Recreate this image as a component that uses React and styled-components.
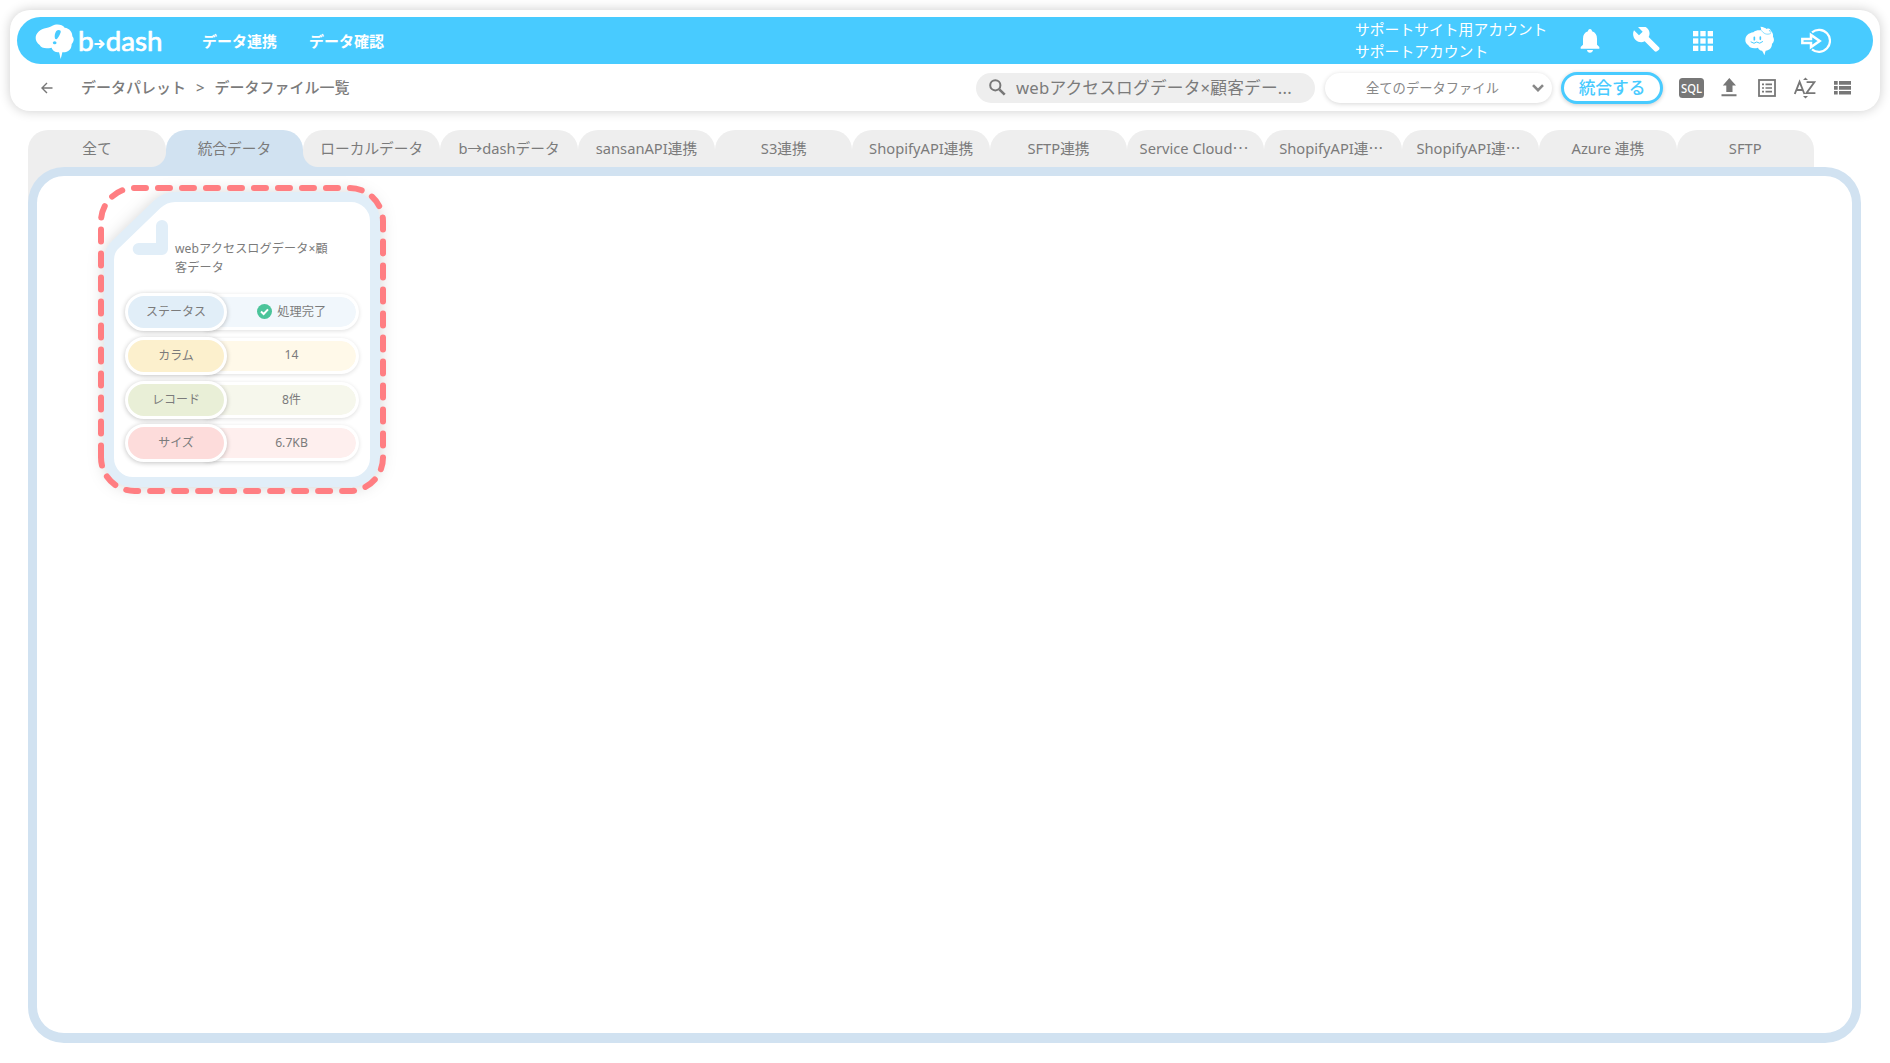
import React from "react";
import styled, { createGlobalStyle } from "styled-components";

const Global = createGlobalStyle`
  * { box-sizing: border-box; }
  body {
    margin: 0;
    background: #fff;
    color: #7b7b7b;
    font-family: "Noto Sans", "Noto Sans CJK JP", sans-serif;
    overflow: hidden;
  }
  button { font: inherit; color: inherit; background: none; border: 0; padding: 0; margin: 0; }
  svg { display: block; flex: none; }
`;

const Page = styled.div`
  height: 1063px;
  padding: 10px 10px 0;
  display: flex;
  flex-direction: column;
`;

const Header = styled.header`
  height: 101px;
  padding: 7px;
  border-radius: 20px;
  background: #fff;
  box-shadow: 0 0 12px rgba(0, 0, 0, 0.2);
`;

const TopBar = styled.div`
  height: 47px;
  border-radius: 24px;
  background: #48cbff;
  color: #fff;
  display: flex;
  align-items: center;
  padding: 0 42px 0 17px;
`;

const Nav = styled.nav`
  display: flex;
  gap: 32px;
  margin-left: 38px;
  font-size: 15px;
  font-weight: 700;
  line-height: 20px;
`;

const Account = styled.div`
  margin-left: auto;
  width: 225px;
  font-size: 14.8px;
  line-height: 21.5px;
  white-space: nowrap;
`;

const TopIcons = styled.div`
  display: flex;
  align-items: center;
`;

const IconButton = styled.button`
  display: block;
  margin-left: ${(p) => p.$gap || 0}px;
`;

const SubBar = styled.div`
  height: 47px;
  display: flex;
  align-items: center;
  padding: 0 22px 0 24px;
`;

const Crumbs = styled.div`
  display: flex;
  gap: 10px;
  margin: 0 0 1px 28px;
  font-size: 15px;
  line-height: 20px;
  font-weight: 500;
`;

const Search = styled.div`
  margin-left: auto;
  width: 339px;
  height: 30px;
  border-radius: 15px;
  background: #eee;
  display: flex;
  align-items: center;
  gap: 10px;
  padding-left: 13px;
  font-size: 16.7px;
  letter-spacing: 0.2px;
  line-height: 24px;
  white-space: nowrap;
`;

const Select = styled.div`
  margin-left: 10px;
  width: 227px;
  height: 30px;
  border-radius: 15px;
  box-shadow: 0 1px 5px rgba(0, 0, 0, 0.16);
  display: flex;
  align-items: center;
  justify-content: space-between;
  padding: 0 8px 0 41px;
  font-size: 13.3px;
  color: #888;
`;

const MergeButton = styled.button`
  && {
    margin: 0 16px 0 9px;
    width: 102px;
    height: 32px;
    border: 3px solid #48cbff;
    border-radius: 16px;
    background: #fff;
    box-shadow: 0 1px 4px rgba(0, 0, 0, 0.2);
    color: #48cbff;
    font-size: 16.7px;
    font-weight: 500;
    line-height: 24px;
  }
`;

const Main = styled.main`
  margin: 19px 0 0 18.4px;
  width: 1832.8px;
`;

const Tabs = styled.div`
  display: flex;
  height: 37px;
  width: 1785.5px;
`;

const Tab = styled.div`
  position: relative;
  flex: 1 1 0;
  min-width: 0;
  height: 37px;
  border-radius: 20px 20px 0 0;
  background: ${(p) => (p.$active ? "#d1e2f1" : "#eee")};
  text-align: center;
  font-size: 14.7px;
  line-height: 37px;
  white-space: nowrap;
  z-index: ${(p) => (p.$active ? 1 : 0)};
  &::before,
  &::after {
    content: "";
    display: ${(p) => (p.$active ? "block" : "none")};
    position: absolute;
    bottom: 0;
    width: 15px;
    height: 15px;
  }
  &::before {
    left: -15px;
    background: radial-gradient(circle at 0 0, transparent 14.5px, #d1e2f1 15.5px);
  }
  &::after {
    right: -15px;
    background: radial-gradient(circle at 100% 0, transparent 14.5px, #d1e2f1 15.5px);
  }
`;

const Dots = styled.span`
  font-family: "Noto Sans CJK JP", sans-serif;
  line-height: 1;
  margin-right: 4px;
  vertical-align: ${(p) => p.$raise || 0}px;
`;

const PanelBack = styled.div`
  background: linear-gradient(#eee, #eee) 0 0 / 60px 38px no-repeat;
`;

const Panel = styled.section`
  height: 876px;
  border: 9px solid #d1e2f1;
  border-bottom-width: 10px;
  border-radius: 36px;
  background: #fff;
  padding: 9px 60.6px;
`;

const Card = styled.article`
  position: relative;
  width: 288px;
  height: 309px;
  padding: 55px 27px 0;
`;

const CardFrame = styled.svg`
  position: absolute;
  inset: 0;
  overflow: visible;
`;

const CardBody = styled.div`
  position: relative;
`;

const CardTitle = styled.h3`
  margin: 0 0 16px 50px;
  height: 37px;
  font-size: 12.1px;
  letter-spacing: 0.12px;
  font-weight: 400;
  line-height: 18.5px;
  white-space: nowrap;
`;

const Rows = styled.div`
  display: flex;
  flex-direction: column;
  gap: 5.8px;
`;

const Row = styled.div`
  display: flex;
  align-items: center;
  width: 234px;
  height: 38px;
`;

const Label = styled.div`
  position: relative;
  z-index: 1;
  width: 102px;
  height: 38px;
  border: 3px solid #fff;
  border-radius: 19px;
  background: ${(p) => p.$bg};
  box-shadow: 0 1px 5px rgba(0, 0, 0, 0.24);
  text-align: center;
  font-size: 12px;
  line-height: 31px;
`;

const Value = styled.div`
  width: 154px;
  height: 36px;
  margin-left: -22px;
  border: 3px solid #fff;
  border-left: 0;
  border-radius: 0 18px 18px 0;
  background: ${(p) => p.$bg};
  background-clip: padding-box;
  box-shadow: 0 1px 4px rgba(0, 0, 0, 0.13);
  display: flex;
  align-items: center;
  justify-content: center;
  gap: 5.5px;
  padding: 0 0 2px 22px;
  font-size: 12.2px;
`;

const Logo = () => (
  <svg width="130" height="38" viewBox="102 66 390 114">
    <path
      fill="#fff"
      d="M107 114C107 99 121 87 139 84C148 82 151 80 157 77C168 71 187 72 194 83C208 84 218 97 217 109C224 116 221 127 215 132C215 148 205 158 187 157C186 164 184 170 182 177C180 169 179 163 177 157C165 157 157 151 155 143C136 147 124 144 119 135C111 130 107 122 107 114Z"
    />
    <path d="M166 117C162 111 165 98 169 93C174 88 184 90 182 97C180 104 174 114 170 118Z" fill="#48cbff" />
    <ellipse cx="164" cy="128" rx="5.500" ry="4.500" fill="#48cbff" />
    <g fill="#fff" stroke="#fff" strokeWidth="2.2" strokeLinejoin="round" fontFamily="Lato, sans-serif" fontSize="82">
      <text x="234" y="152" textLength="47" lengthAdjust="spacingAndGlyphs">b</text>
      <text x="317" y="152" textLength="170" lengthAdjust="spacingAndGlyphs">dash</text>
    </g>
    <path d="M286 132H309M300 122L311 132L300 142" fill="none" stroke="#fff" strokeWidth="6.500" strokeLinecap="round" strokeLinejoin="round" />
  </svg>
);

const Bell = () => (
  <svg width="20" height="24" viewBox="0 0 60 72" fill="#fff">
    <path d="M30 0C34 0 36 3 36 7C46 10 51 18 51 29V47L58 54V59H2V54L9 47V29C9 18 14 10 24 7C24 3 26 0 30 0ZM21 63H39C38 69 35 71 30 71C25 71 22 69 21 63Z" />
  </svg>
);

const Wrench = () => (
  <svg width="27" height="27" viewBox="98 79 81 81" fill="#fff">
    <path d="M176 140L145 109C150 99 148 89 140 82C132 75 121 74 112 78L127 93L116 104L101 89C96 98 98 110 106 118C114 125 124 127 133 122L163 152C165 154 168 154 170 152L176 147C178 145 178 142 176 140Z" />
  </svg>
);

const Grid = () => (
  <svg width="20" height="20" viewBox="0 0 60 60" fill="#fff">
    {[0, 22, 44].map((y) => [0, 22, 44].map((x) => <rect key={`${x}-${y}`} x={x} y={y} width="16" height="16" />))}
  </svg>
);

const Mascot = () => (
  <svg width="30" height="30" viewBox="436 78 90 90">
    <path
      fill="#fff"
      d="M437 121C437 107 447 99 461 97C467 91 476 90 483 91C486 90 484 84 482 80C492 81 498 84 501 87C508 83 513 88 513 92C519 96 521 103 520 110C525 117 523 127 517 131C517 143 509 151 498 152C496 157 496 161 494 166C492 160 490 156 487 152C481 151 477 148 475 143C464 147 449 144 446 136C440 132 437 127 437 121Z"
    />
    <g fill="none" stroke="#48cbff" strokeWidth="3" strokeLinecap="round">
      <path d="M464 112V119M482 111V118" strokeWidth="5" />
      <path d="M454 126Q464 134 471 126Q480 134 489 125" />
      <path d="M486 92C492 102 502 105 512 101M509 91L513 97" strokeWidth="2" />
    </g>
  </svg>
);

const Logout = () => (
  <svg width="30" height="26" viewBox="604 85 90 78" fill="none" stroke="#fff">
    <path d="M637 98A33 33 0 1 1 637 149" strokeWidth="6.5" />
    <path d="M608 118H634V106L660 124L634 142V130H608Z" strokeWidth="7.5" />
  </svg>
);

const Back = () => (
  <svg width="12" height="12" viewBox="0 0 12 12" fill="none" stroke="#777" strokeWidth="1.4">
    <path d="M11.5 6H1.2M6 1L1 6L6 11" />
  </svg>
);

const Magnifier = () => (
  <svg width="17" height="17" viewBox="0 0 17 17" fill="none" stroke="#777">
    <circle cx="6.3" cy="6.3" r="5.1" strokeWidth="2" />
    <path d="M10.3 10.3L15.7 15.7" strokeWidth="2.6" />
  </svg>
);

const Chevron = () => (
  <svg width="12" height="8" viewBox="0 0 12 8" fill="none" stroke="#888" strokeWidth="2.6">
    <path d="M1 1.2L6 6.2L11 1.2" />
  </svg>
);

const Sql = () => (
  <svg width="25" height="20" viewBox="0 0 25 20">
    <rect width="25" height="20" rx="3.5" fill="#777" />
    <text x="2" y="14.5" textLength="21" lengthAdjust="spacingAndGlyphs" fontSize="12" fontWeight="500" fontFamily="Noto Sans, sans-serif" fill="#fff">SQL</text>
  </svg>
);

const Upload = () => (
  <svg width="16" height="19" viewBox="0 0 16 19" fill="#777">
    <path d="M8.300 0L15 7.500H11.500V14H5.300V7.500H1.800ZM0.500 16.2H15.500V18.2H0.500Z" />
  </svg>
);

const ListBox = () => (
  <svg width="18" height="18" viewBox="0 0 18 18" fill="none" stroke="#777">
    <rect x="1" y="1" width="16" height="16" strokeWidth="1.8" />
    <path d="M4 5.4H6M4 9H6M4 12.6H6M7.5 5.4H14M7.5 9H14M7.5 12.6H14" strokeWidth="1.7" />
  </svg>
);

const SortAz = () => (
  <svg width="22" height="22" viewBox="0 0 22 22" fill="#777">
    <path d="M9 3L11.5 0.5L14 3ZM9 19L11.5 21.5L14 19Z" />
    <g fill="none" stroke="#777" strokeWidth="1.8">
      <path d="M0.8 17L5.6 4.8L10.4 17M2.5 13H8.7M12.6 5.2H20.3L12.4 16.2H21.4" />
    </g>
  </svg>
);

const RowsIcon = () => (
  <svg width="17" height="14" viewBox="0 0 17 14" fill="#777">
    <path d="M0 0H3.7V3.7H0ZM5 0H17V3.7H5ZM0 5H3.7V8.7H0ZM5 5H17V8.7H5ZM0 10H3.7V13.5H0ZM5 10H17V13.5H5Z" />
  </svg>
);

const Check = () => (
  <svg width="15" height="15" viewBox="0 0 15 15">
    <circle cx="7.5" cy="7.5" r="7.5" fill="#4bc49a" />
    <path d="M4 7.6L6.6 10L11 5.4" fill="none" stroke="#fff" strokeWidth="2" />
  </svg>
);

const tabs = [
  { name: "全て" },
  { name: "統合データ" },
  { name: "ローカルデータ" },
  { name: "b→dashデータ" },
  { name: "sansanAPI連携" },
  { name: "S3連携" },
  { name: "ShopifyAPI連携" },
  { name: "SFTP連携" },
  { name: "Service Cloud", cut: true, raise: 5 },
  { name: "ShopifyAPI連", cut: true },
  { name: "ShopifyAPI連", cut: true },
  { name: "Azure 連携" },
  { name: "SFTP" },
];

const rows = [
  { label: "ステータス", value: "処理完了", done: true, bg: "#e1eef8", soft: "#f1f7fc" },
  { label: "カラム", value: "14", bg: "#fcf0cd", soft: "#fff9e9" },
  { label: "レコード", value: "8件", bg: "#e9efd7", soft: "#f6f7ec" },
  { label: "サイズ", value: "6.7KB", bg: "#fddcdb", soft: "#feefee" },
];

export default function App() {
  return (
    <>
      <Global />
      <Page>
        <Header>
          <TopBar>
            <Logo />
            <Nav>
              <span>データ連携</span>
              <span>データ確認</span>
            </Nav>
            <Account>
              サポートサイト用アカウント
              <br />
              サポートアカウント
            </Account>
            <TopIcons>
              <IconButton><Bell /></IconButton>
              <IconButton $gap={33}><Wrench /></IconButton>
              <IconButton $gap={33}><Grid /></IconButton>
              <IconButton $gap={32}><Mascot /></IconButton>
              <IconButton $gap={26}><Logout /></IconButton>
            </TopIcons>
          </TopBar>
          <SubBar>
            <Back />
            <Crumbs>
              <span>データパレット</span>
              <span>&gt;</span>
              <span>データファイル一覧</span>
            </Crumbs>
            <Search>
              <Magnifier />
              <span>webアクセスログデータ×顧客デー...</span>
            </Search>
            <Select>
              全てのデータファイル
              <Chevron />
            </Select>
            <MergeButton>統合する</MergeButton>
            <IconButton><Sql /></IconButton>
            <IconButton $gap={17}><Upload /></IconButton>
            <IconButton $gap={21}><ListBox /></IconButton>
            <IconButton $gap={18}><SortAz /></IconButton>
            <IconButton $gap={18}><RowsIcon /></IconButton>
          </SubBar>
        </Header>
        <Main>
          <Tabs>
            {tabs.map((t, i) => (
              <Tab key={i} $active={i === 1}>
                {t.name}
                {t.cut && <Dots $raise={t.raise}>⋯</Dots>}
              </Tab>
            ))}
          </Tabs>
          <PanelBack>
            <Panel>
              <Card>
                <CardFrame width="288" height="309" viewBox="98 185 288 309" fill="none">
                  <path
                    d="M109 260Q109 250 116 244L157 204.500Q165 197 175 197H351A24 24 0 0 1 375 221V458A24 24 0 0 1 351 482H133A24 24 0 0 1 109 458Z"
                    fill="#fff"
                    stroke="#e1eef8"
                    strokeWidth="10"
                    style={{ filter: "drop-shadow(0 1px 8px rgba(0,0,0,0.17))" }}
                  />
                  <path d="M162 226V249H138.700" stroke="#e1eef8" strokeWidth="12" strokeLinecap="round" strokeLinejoin="round" />
                  <path
                    d="M101 457.500V221.500A33.500 33.500 0 0 1 134.500 188H349.500A33.500 33.500 0 0 1 383 221.500V457.500A33.500 33.500 0 0 1 349.500 491H134.500A33.500 33.500 0 0 1 101 457.500"
                    stroke="#ff7e82"
                    strokeWidth="6"
                    strokeLinecap="round"
                    strokeDasharray="12 12"
                  />
                </CardFrame>
                <CardBody>
                  <CardTitle>
                    webアクセスログデータ×顧
                    <br />
                    客データ
                  </CardTitle>
                  <Rows>
                    {rows.map((r) => (
                      <Row key={r.label}>
                        <Label $bg={r.bg}>{r.label}</Label>
                        <Value $bg={r.soft}>
                          {r.done && <Check />}
                          {r.value}
                        </Value>
                      </Row>
                    ))}
                  </Rows>
                </CardBody>
              </Card>
            </Panel>
          </PanelBack>
        </Main>
      </Page>
    </>
  );
}
